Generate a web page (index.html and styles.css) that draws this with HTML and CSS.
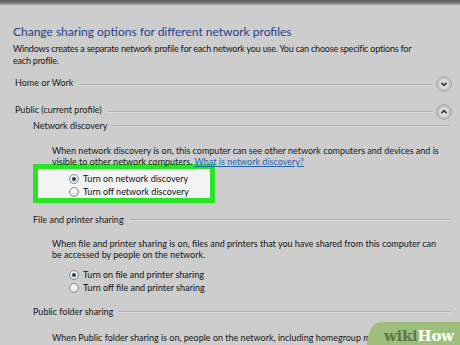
FILE: index.html
```html
<!DOCTYPE html>
<html>
<head>
<meta charset="utf-8">
<link rel="stylesheet" href="styles.css">
</head>
<body>
<div class="topbar"></div>
<main class="content">
  <h1 class="title">Change sharing options for different network profiles</h1>
  <p class="intro">Windows creates a separate network profile for each network you use. You can choose specific options for<br>each profile.</p>

  <div class="section first">
    <span class="section-label">Home or Work</span>
    <span class="rule"></span>
    <span class="toggle"><svg viewBox="0 0 16 16" width="16" height="16"><circle cx="8" cy="8" r="7.3" fill="#c6c6c6" stroke="#9a9a9a" stroke-width="0.8"/><circle cx="8" cy="8" r="5.6" fill="#d9d9d9" stroke="#b3b3b3" stroke-width="0.6"/><path d="M5.4 6.9 L8 9.4 L10.6 6.9" fill="none" stroke="#3a3a3a" stroke-width="1.6"/></svg></span>
  </div>

  <div class="section second">
    <span class="section-label">Public (current profile)</span>
    <span class="rule"></span>
    <span class="toggle"><svg viewBox="0 0 16 16" width="16" height="16"><circle cx="8" cy="8" r="7.3" fill="#c6c6c6" stroke="#9a9a9a" stroke-width="0.8"/><circle cx="8" cy="8" r="5.6" fill="#d9d9d9" stroke="#b3b3b3" stroke-width="0.6"/><path d="M5.4 9.1 L8 6.6 L10.6 9.1" fill="none" stroke="#3a3a3a" stroke-width="1.6"/></svg></span>
  </div>

  <div class="sub sub-discovery">
    <div class="sub-head"><span class="sub-label">Network discovery</span><span class="rule"></span></div>
    <p class="para">When network discovery is on, this computer can see other network computers and devices and is<br>visible to other network computers. <a href="#">What is network discovery?</a></p>
    <div class="options highlight">
      <label class="opt"><span class="radio on"></span>Turn on network discovery</label>
      <label class="opt"><span class="radio"></span>Turn off network discovery</label>
    </div>
  </div>

  <div class="sub sub-printer">
    <div class="sub-head"><span class="sub-label">File and printer sharing</span><span class="rule"></span></div>
    <p class="para">When file and printer sharing is on, files and printers that you have shared from this computer can<br>be accessed by people on the network.</p>
    <div class="options plain">
      <label class="opt"><span class="radio on"></span>Turn on file and printer sharing</label>
      <label class="opt"><span class="radio"></span>Turn off file and printer sharing</label>
    </div>
  </div>

  <div class="sub sub-public">
    <div class="sub-head"><span class="sub-label">Public folder sharing</span><span class="rule"></span></div>
    <p class="para">When Public folder sharing is on, people on the network, including homegroup members, can<br>access files in the Public folders. <a href="#">What are the Public folders?</a></p>
  </div>
</main>
<div class="wikihow"><span class="wiki">wiki</span><span class="how">How</span></div>
</body>
</html>
```
FILE: styles.css
```css
html, body {
  margin: 0;
  padding: 0;
}
body {
  width: 460px;
  height: 345px;
  overflow: hidden;
  position: relative;
  background: #cdcdcd;
  font-family: Lato, "Noto Sans", sans-serif;
  font-size: 9px;
  color: #161616;
}
.topbar {
  height: 5px;
  background: linear-gradient(#5a5a5a, #777 55%, #b0b0b0);
}
.content {
  padding: 0 10px 0 13px;
}
.title {
  margin: 19px 0 0;
  font-size: 12px;
  font-weight: normal;
  color: #233f8c;
  line-height: 16px;
}
.intro {
  margin: 3px 0 0;
  line-height: 12px;
  white-space: nowrap;
  letter-spacing: -0.2px;
}
.section {
  display: flex;
  align-items: center;
  height: 16px;
  line-height: 16px;
  padding-left: 2px;
}
.section.first { margin-top: 8px; }
.section.second { margin-top: 11px; }
.section-label {
  color: #1c1c1c;
}
.rule {
  flex: 1;
  height: 1px;
  background: #adadad;
  border-bottom: 1px solid #dadada;
  margin: 3px 3px 0 6px;
}
.toggle {
  display: flex;
  width: 16px;
  height: 16px;
  margin: 1px -2px 0 0;
}
.section.second .toggle { margin-top: 3px; }
.sub {
  padding-left: 20px;
}
.sub-head {
  display: flex;
  align-items: center;
  height: 16px;
  line-height: 16px;
}
.sub-head .rule { margin-right: 0; margin-top: 0; }
.sub-discovery .sub-head { margin-top: 0; }
.sub-printer .sub-head { margin-top: 9px; }
.sub-public .sub-head { margin-top: 10px; }
.para {
  margin: 11px 0 0 19px;
  line-height: 11px;
  white-space: nowrap;
}
.sub-printer .para { margin-top: 10px; }
.sub-public .para { margin-top: 12px; }
.para a {
  color: #1f62b3;
}
.options {
  display: flex;
  flex-direction: column;
  box-sizing: border-box;
}
.plain {
  margin-top: 8px;
  padding-left: 36px;
}
.highlight {
  margin-top: -3px;
  width: 182px;
  height: 39px;
  padding: 3px 0 0 31px;
  border: 5px solid #25e525;
  background: #f3f3f3;
}
.opt {
  display: flex;
  align-items: center;
  height: 13px;
  color: #111;
}
.radio {
  width: 10px;
  height: 10px;
  border-radius: 50%;
  border: 1px solid #8f8f8f;
  background: radial-gradient(circle at 50% 35%, #ffffff, #d2d2d2);
  margin-right: 4px;
  box-sizing: border-box;
  position: relative;
  flex: none;
}
.radio.on::after {
  content: "";
  position: absolute;
  left: 2px;
  top: 2px;
  width: 4px;
  height: 4px;
  border-radius: 50%;
  background: #23406d;
}
.wikihow {
  position: absolute;
  right: 0;
  bottom: 0;
  width: 93px;
  height: 23px;
  background: #9ebf7c;
  border-top-left-radius: 14px 23px;
  font-family: "DejaVu Serif", "Liberation Serif", serif;
  font-weight: bold;
  font-size: 15px;
  line-height: 23px;
  padding: 3px 0 0 17px;
  box-sizing: border-box;
  letter-spacing: -0.3px;
}
.wiki { color: #5d7848; }
.how { color: #ffffff; }
```
